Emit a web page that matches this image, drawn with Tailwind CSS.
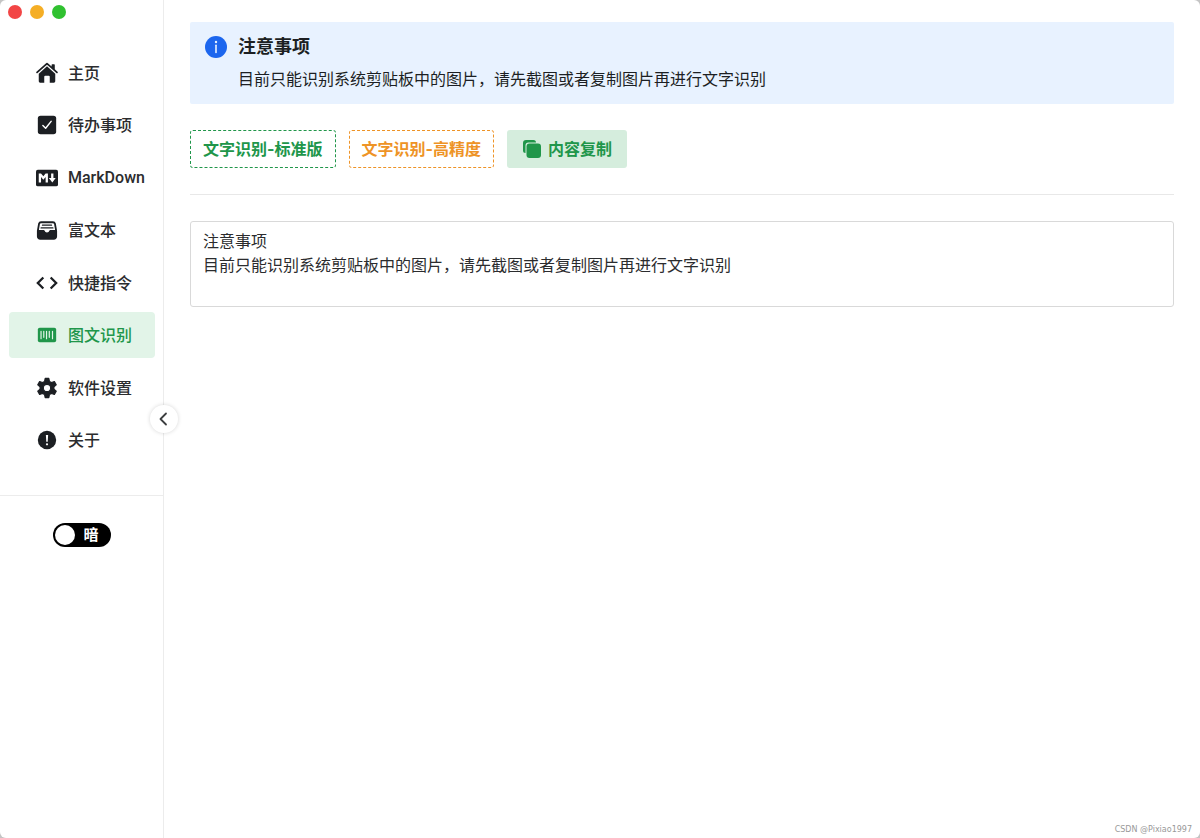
<!DOCTYPE html>
<html lang="zh-CN">

<head>
  <meta charset="UTF-8" />
  <meta name="viewport" content="width=device-width, initial-scale=1.0" />
  <title>图文识别</title>
  <script src="https://cdn.jsdelivr.net/npm/@tailwindcss/browser@4"></script>
</head>

<body class="bg-[#c4c4c4] font-['Inter','Noto_Sans_CJK_SC',sans-serif] text-base text-[#2b2c2e]">

  <div class="relative flex min-h-screen rounded-md bg-white overflow-hidden">

    <!-- 侧边栏 -->
    <aside class="relative flex w-[164px] shrink-0 flex-col border-r border-[#ececec]">
      <div class="flex h-6 items-center gap-2 pl-2">
        <span class="size-[14px] rounded-full bg-[#f24545]"></span>
        <span class="size-[14px] rounded-full bg-[#f5ae25]"></span>
        <span class="size-[14px] rounded-full bg-[#30c130]"></span>
      </div>

      <nav class="mt-[26px] flex h-[413px] flex-col justify-between pr-2 pl-[9px] font-medium">
        <a href="#" class="flex h-[46px] items-center gap-[10px] rounded-sm pl-[27px]">
          <svg class="size-[22px] shrink-0 text-[#1c1f23]" viewBox="0 0 24 24" fill="currentColor"><path d="M10.7 1.5a2 2 0 0 1 2.6 0L17 4.8V3.2c0-.4.3-.7.7-.7h2.1c.4 0 .7.3.7.7v4.7l3 2.7c.4.4.5 1 .1 1.4s-1 .4-1.4.1L12.7 3.5a1 1 0 0 0-1.4 0L1.8 12.1c-.4.3-1 .3-1.4-.1s-.3-1 .1-1.4z" /><path d="M12 4.6l9 8.2V21a1.5 1.5 0 0 1-1.5 1.5H15V16a1 1 0 0 0-1-1h-4a1 1 0 0 0-1 1v6.5H4.5A1.5 1.5 0 0 1 3 21v-8.2z" /></svg>
          主页
        </a>
        <a href="#" class="flex h-[46px] items-center gap-[10px] rounded-sm pl-[27px]">
          <svg class="size-[22px] shrink-0 text-[#1c1f23]" viewBox="0 0 24 24" fill="none"><rect x="2" y="2" width="20" height="20" rx="3" fill="currentColor" /><path d="M7.5 12.5l3 3 6-7.5" stroke="#fff" stroke-width="1.6" stroke-linecap="round" stroke-linejoin="round" /></svg>
          待办事项
        </a>
        <a href="#" class="flex h-[46px] items-center gap-[10px] rounded-sm pl-[27px]">
          <svg class="size-[22px] shrink-0 text-[#1c1f23]" viewBox="0 0 24 24"><rect y="3" width="24" height="18" rx="2" fill="currentColor" /><path d="M3 17V7h2.5L8 10.2 10.5 7H13v10h-2.5v-6L8 14l-2.500-3v6zM16.500 7H19v5h2.500l-3.700 5-3.800-5h2.500z" fill="#fff" /></svg>
          <span class="font-['Roboto',sans-serif]">MarkDown</span>
        </a>
        <a href="#" class="flex h-[46px] items-center gap-[10px] rounded-sm pl-[27px]">
          <svg class="size-[22px] shrink-0 text-[#1c1f23]" viewBox="0 0 24 24" fill="none"><path d="M5.500 3.500h13c1.100 0 1.900.7 2.200 1.800L22 13v6a2.500 2.500 0 0 1-2.500 2.500h-15A2.500 2.500 0 0 1 2 19v-6l1.300-7.700c.3-1.100 1.100-1.800 2.200-1.800z" stroke="currentColor" stroke-width="2" /><path d="M2 12h6.500c.5 0 .8.300.9.800a2.700 2.700 0 0 0 5.200 0c.1-.5.4-.8.900-.8H22v7.500a2 2 0 0 1-2 2H4a2 2 0 0 1-2-2z" fill="currentColor" /><path d="M7 6.700h10M5.500 9.700h13" stroke="currentColor" stroke-width="1.300" stroke-linecap="round" /></svg>
          富文本
        </a>
        <a href="#" class="flex h-[46px] items-center gap-[10px] rounded-sm pl-[27px]">
          <svg class="size-[22px] shrink-0 text-[#1c1f23]" viewBox="0 0 24 24" fill="none" stroke="currentColor" stroke-width="2.5"><path d="M8 6l-6 6 6 6M16 6l6 6-6 6" /></svg>
          快捷指令
        </a>
        <a href="#" aria-current="page" class="flex h-[46px] items-center gap-[10px] rounded-sm bg-[#e2f4e8] pl-[27px] text-[#20964a]">
          <svg class="size-[22px] shrink-0" viewBox="0 0 24 24" fill="none"><rect x="2" y="4" width="20" height="16" rx="2" fill="currentColor" /><path d="M5.500 8v8M8.500 8v6.500M11.500 8v8M14.500 8v6.500M18 8v8" stroke="#e2f4e8" stroke-width="1.300" stroke-linecap="round" /></svg>
          图文识别
        </a>
        <a href="#" class="flex h-[46px] items-center gap-[10px] rounded-sm pl-[27px]">
          <svg class="size-[22px] shrink-0 text-[#1c1f23]" viewBox="0 0 24 24" fill="currentColor"><path fill-rule="evenodd" d="M10 1.500h4l.7 3.300 2.200 1.300 3.200-1.100 2 3.500-2.500 2.200v2.600l2.500 2.200-2 3.500-3.200-1.100-2.200 1.300-.7 3.300h-4l-.7-3.300-2.200-1.300-3.200 1.100-2-3.500 2.500-2.200v-2.600L1.900 8.500l2-3.500 3.200 1.100 2.200-1.300zM12 8a4 4 0 1 0 0 8 4 4 0 0 0 0-8z" stroke="currentColor" stroke-width="1.200" stroke-linejoin="round" /></svg>
          软件设置
        </a>
        <a href="#" class="flex h-[46px] items-center gap-[10px] rounded-sm pl-[27px]">
          <svg class="size-[22px] shrink-0 text-[#1c1f23]" viewBox="0 0 24 24"><circle cx="12" cy="12" r="10" fill="currentColor" /><path d="M10.800 6.500h2.400l-.4 7.500h-1.600z" fill="#fff" /><circle cx="12" cy="16.700" r="1.200" fill="#fff" /></svg>
          关于
        </a>
      </nav>

      <div class="mt-8 flex justify-center border-t border-[#ececec] pt-[27px]">
        <label class="flex h-6 w-[58px] cursor-pointer items-center justify-between rounded-full bg-black pr-3 pl-[2px] text-[15px] font-bold text-white">
          <input type="checkbox" role="switch" class="sr-only" />
          <span class="size-5 rounded-full bg-white"></span>
          暗
        </label>
      </div>

      <button type="button" aria-label="收起侧边栏" class="absolute top-[405px] -right-[15px] z-10 flex size-7 items-center justify-center rounded-full bg-white shadow-[0_0_4px_rgba(0,0,0,0.16)]">
        <svg class="size-4" viewBox="0 0 16 16" fill="none" stroke="#3c3e40" stroke-width="1.800" stroke-linecap="round" stroke-linejoin="round"><path d="M10 2.500L4.500 8l5.500 5.500" /></svg>
      </button>
    </aside>

    <!-- 主内容 -->
    <main class="min-w-0 flex-1 px-[26px] pt-[22px]">
      <section class="flex h-[82px] gap-[11px] rounded-xs bg-[#e8f2ff] pt-[13px] pl-[15px] text-[#1c1f23]">
        <svg class="mt-px size-[22px] shrink-0" viewBox="0 0 22 22"><circle cx="11" cy="11" r="11" fill="#1c66ee" /><circle cx="11" cy="6" r="1.200" fill="#e8f2ff" /><path d="M11 9.200v7.300" stroke="#e8f2ff" stroke-width="1.600" stroke-linecap="round" /></svg>
        <div>
          <h1 class="text-lg leading-6 font-bold">注意事项</h1>
          <p class="mt-2 leading-6">目前只能识别系统剪贴板中的图片，请先截图或者复制图片再进行文字识别</p>
        </div>
      </section>

      <div class="mt-[26px] flex gap-[13px] font-bold">
        <button type="button" class="h-[38px] rounded-[3px] border border-dashed border-[#20964a] px-3 text-[#20964a]">文字识别-标准版</button>
        <button type="button" class="h-[38px] rounded-[3px] border border-dashed border-[#ee9326] px-3 text-[#ee9326]">文字识别-高精度</button>
        <button type="button" class="flex h-[38px] items-center gap-[6px] rounded-[3px] bg-[#d5eddd] px-[15px] text-[#20964a]">
          <svg class="size-5" viewBox="0 0 20 20"><path d="M3.500 14A2.500 2.500 0 0 1 1 11.500V4a3 3 0 0 1 3-3h7.500A2.500 2.500 0 0 1 14 3.500H6.500a3 3 0 0 0-3 3z" fill="currentColor" /><rect x="4.500" y="4.500" width="14.500" height="14.500" rx="3" fill="currentColor" /></svg>
          内容复制
        </button>
      </div>

      <hr class="mt-[26px] border-[#e8e8e8]" />

      <textarea aria-label="识别结果" class="mt-[26px] block h-[86px] w-full resize-none rounded-[3px] border border-[#d9d9d9] px-3 py-[7px] leading-6 outline-none">注意事项
目前只能识别系统剪贴板中的图片，请先截图或者复制图片再进行文字识别</textarea>
    </main>

    <p class="absolute right-2 bottom-[2px] font-['DejaVu_Sans',sans-serif] text-[8px] leading-3 text-[#999]">CSDN @Pixiao1997</p>
  </div>

</body>

</html>
